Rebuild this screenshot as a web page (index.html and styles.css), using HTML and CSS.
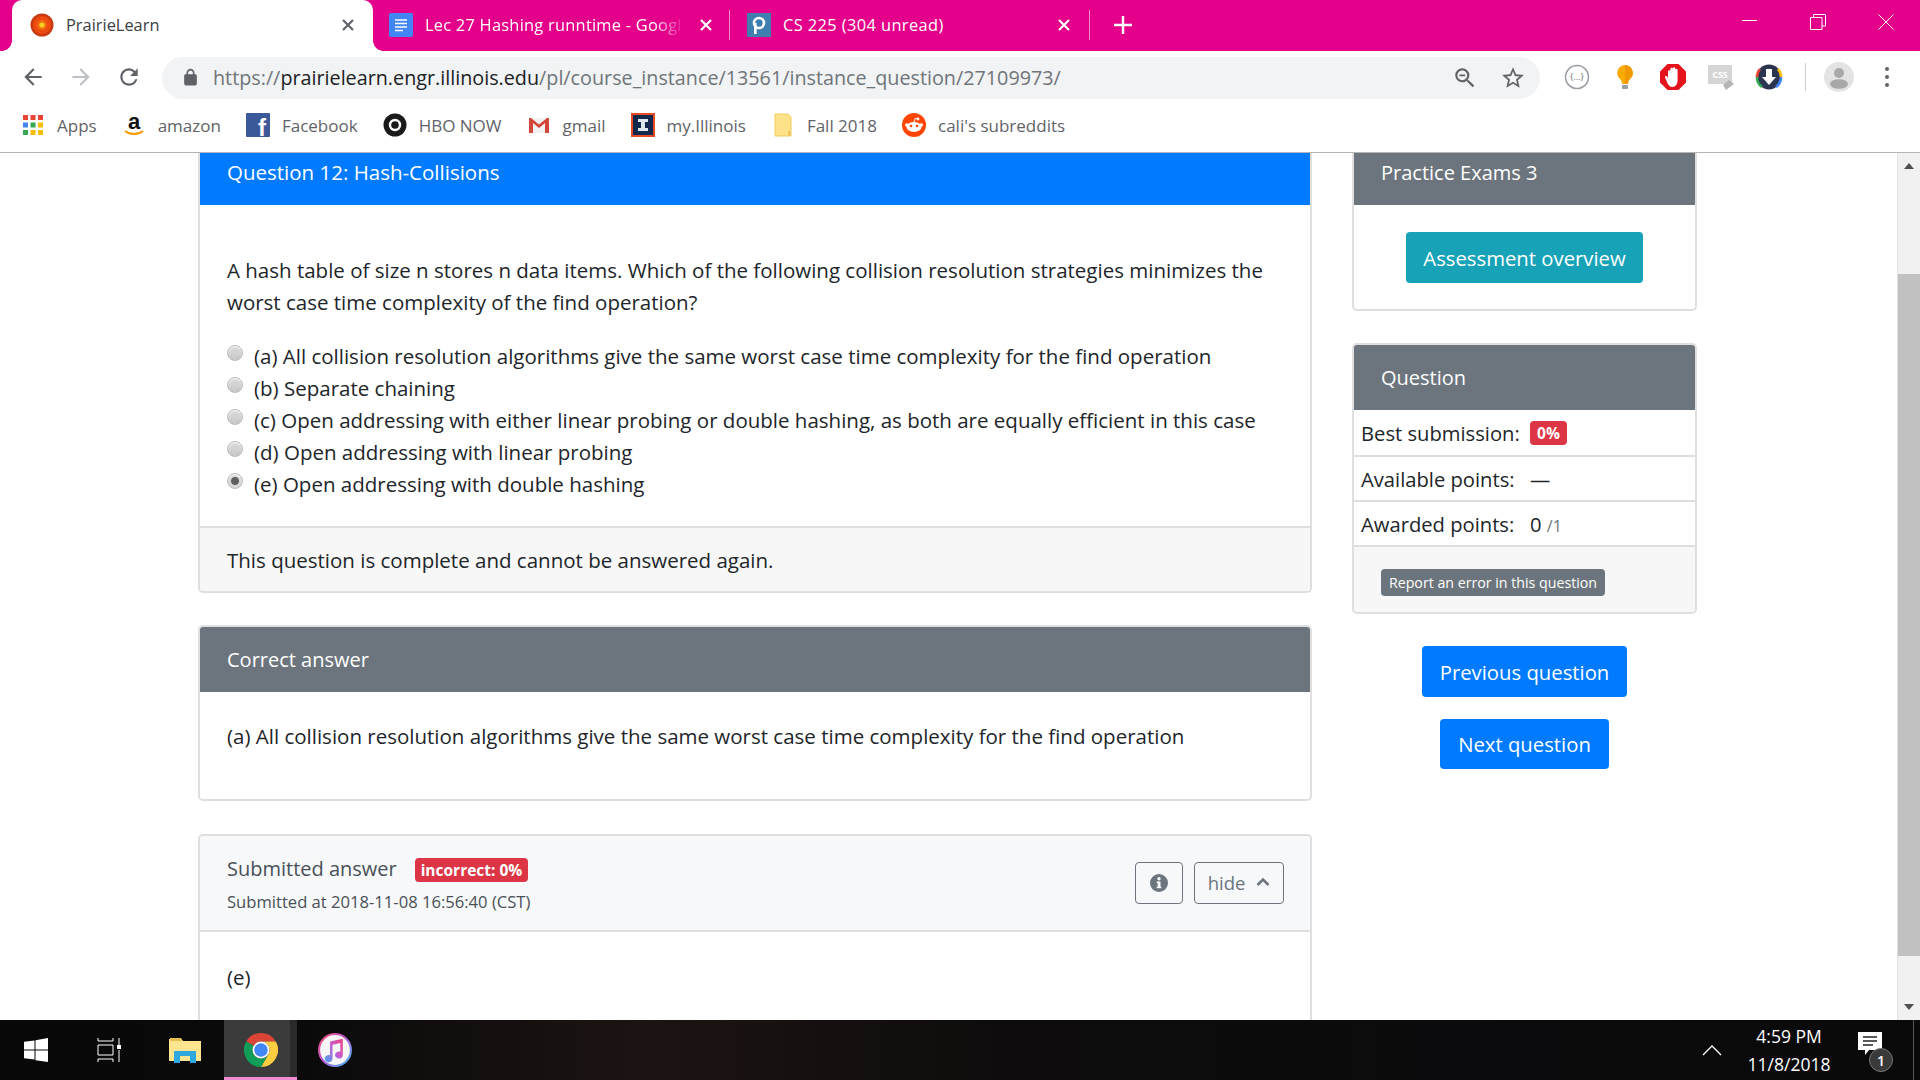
FILE: index.html
```html
<!DOCTYPE html>
<html lang="en">
<head>
<meta charset="utf-8">
<title>PrairieLearn</title>
<link rel="stylesheet" href="styles.css">
</head>
<body>
<div class="app">
  <header class="tabbar">
    <div class="tab tab-active">
      <svg class="fav" viewBox="0 0 24 24"><circle cx="12" cy="12" r="11.500" fill="#c93a12"/><circle cx="12" cy="12" r="9" fill="#ee4a10"/><circle cx="12" cy="12" r="5" fill="#f46a10"/><circle cx="12" cy="12" r="2.600" fill="#f4d020"/></svg>
      <span class="tab-title tab-title-w1 dark">PrairieLearn</span>
      <svg class="tab-x" viewBox="0 0 14 14"><path d="M2 2l10 10M12 2L2 12" stroke="#5f6368" stroke-width="2.200"/></svg>
    </div>
    <div class="tab tab-second">
      <svg class="fav" viewBox="0 0 24 24"><rect width="24" height="24" rx="2" fill="#4285f4"/><path d="M6 7h12M6 10.500h12M6 14h12M6 17.500h8" stroke="#fff" stroke-width="1.500"/></svg>
      <span class="tab-title tab-title-w2 fade">Lec 27 Hashing runntime - Googl</span>
      <svg class="tab-x" viewBox="0 0 14 14"><path d="M2 2l10 10M12 2L2 12" stroke="#fff" stroke-width="2.200"/></svg>
    </div>
    <div class="tab tab-third">
      <svg class="fav" viewBox="0 0 24 24"><rect width="24" height="24" fill="#3f7fb0"/><circle cx="12" cy="10" r="5" fill="none" stroke="#fff" stroke-width="2.600"/><path d="M8.300 10v11" stroke="#fff" stroke-width="2.600"/></svg>
      <span class="tab-title tab-title-w3">CS 225 (304 unread)</span>
      <svg class="tab-x" viewBox="0 0 14 14"><path d="M2 2l10 10M12 2L2 12" stroke="#fff" stroke-width="2.200"/></svg>
    </div>
    <svg class="tab-plus" viewBox="0 0 18 18"><path d="M9 0v18M0 9h18" stroke="#fff" stroke-width="2.400"/></svg>
    <div class="winctl">
      <svg class="win-ic" viewBox="0 0 16 16"><path d="M0 6.500h15" stroke="#fff" stroke-width="1"/></svg>
      <svg class="win-ic" viewBox="0 0 16 16"><path d="M.5 3.500h11.500v12H.5zM3.500 3.500V.5h12v11.500H12" fill="none" stroke="#fff" stroke-width="1"/></svg>
      <svg class="win-ic" viewBox="0 0 16 16"><path d="M.5.500l15 15M15.500.5l-15 15" stroke="#fff" stroke-width="1"/></svg>
    </div>
  </header>

  <div class="toolbar">
    <svg class="nav" viewBox="0 0 24 24"><path fill="#5f6368" d="M20 11H7.830l5.590-5.590L12 4l-8 8 8 8 1.410-1.410L7.830 13H20z"/></svg>
    <svg class="nav" viewBox="0 0 24 24"><path fill="#bdc1c6" d="M4 11h12.170l-5.590-5.590L12 4l8 8-8 8-1.410-1.410L16.170 13H4z"/></svg>
    <svg class="nav" viewBox="0 0 24 24"><path fill="#5f6368" d="M17.650 6.350A7.958 7.958 0 0012 4c-4.420 0-7.990 3.580-7.990 8s3.570 8 7.990 8c3.730 0 6.840-2.550 7.730-6h-2.080A5.990 5.990 0 0112 18c-3.310 0-6-2.690-6-6s2.690-6 6-6c1.660 0 3.140.69 4.220 1.780L13 11h7V4l-2.350 2.350z"/></svg>
    <div class="omnibox">
      <svg class="lock" viewBox="0 0 24 24"><path fill="#5f6368" d="M18 8h-1V6c0-2.760-2.240-5-5-5S7 3.240 7 6v2H6c-1.100 0-2 .9-2 2v10c0 1.100.9 2 2 2h12c1.100 0 2-.9 2-2V10c0-1.100-.9-2-2-2zM9 6c0-1.660 1.340-3 3-3s3 1.340 3 3v2H9V6z"/></svg>
      <span class="url"><span class="url-dim">https://</span><span class="url-host">prairielearn.engr.illinois.edu</span><span class="url-dim">/pl/course_instance/13561/instance_question/27109973/</span></span>
      <svg class="omni-ic" viewBox="0 0 24 24"><path fill="#5f6368" d="M15.500 14h-.79l-.28-.27A6.471 6.471 0 0016 9.500 6.500 6.500 0 109.500 16c1.610 0 3.090-.59 4.230-1.570l.27.28v.79l5 4.990L20.490 19l-4.990-5zm-6 0C7.010 14 5 11.990 5 9.500S7.010 5 9.500 5 14 7.010 14 9.500 11.990 14 9.500 14zM6.800 8.700h5.400v1.700H6.800z"/></svg>
      <svg class="omni-ic" viewBox="0 0 24 24"><path fill="#5f6368" d="M22 9.240l-7.190-.62L12 2 9.190 8.630 2 9.240l5.460 4.730L5.820 21 12 17.270 18.180 21l-1.630-7.030L22 9.240zM12 15.400l-3.760 2.270 1-4.280-3.320-2.880 4.380-.38L12 6.100l1.710 4.040 4.380.38-3.320 2.880 1 4.280L12 15.400z"/></svg>
    </div>
    <div class="ext-row">
      <svg class="ext" viewBox="0 0 32 32"><circle cx="16" cy="16" r="11.500" fill="#fff" stroke="#9aa0a6" stroke-width="1.600"/><text x="16" y="19" class="ext-txt">{…}</text></svg>
      <svg class="ext" viewBox="0 0 32 32"><path d="M16 4a8 8 0 00-5 14c1.500 1.400 2 3 2 5h6c0-2 .5-3.600 2-5a8 8 0 00-5-14z" fill="#f9ab00"/><path d="M16 4a8 8 0 015 14c-1.500 1.400-2 3-2 5h-3z" fill="#f29900"/><rect x="13" y="24" width="6" height="4" rx="1" fill="#9aa0a6"/></svg>
      <svg class="ext" viewBox="0 0 32 32"><path d="M10.500 3h11L29 10.500v11L21.500 29h-11L3 21.500v-11z" fill="#e5141c"/><path d="M11 17v-6.500a1.200 1.200 0 012.400 0V8a1.200 1.200 0 012.400 0V7.500a1.200 1.200 0 012.400 0V9a1.200 1.200 0 012.400 0v10c0 4-2 7-5 7s-4.500-2-6-6l-1.500-3.500c-.5-1.200 1-2 2-1z" fill="#fff"/></svg>
      <svg class="ext" viewBox="0 0 32 32"><rect x="3" y="4" width="24" height="19" fill="#d5d5d5"/><text x="15" y="17" class="ext-css">CSS</text><path d="M18 24l6-5 5 4-8 6z" fill="#b5b5b5"/></svg>
      <svg class="ext" viewBox="0 0 32 32"><circle cx="16" cy="16" r="12.500" fill="#2c3550"/><path d="M4 16a12 12 0 013-8" fill="none" stroke="#ea4335" stroke-width="2.600"/><path d="M4 16a12 12 0 005 10" fill="none" stroke="#34a853" stroke-width="2.600"/><path d="M28 16a12 12 0 00-3-8" fill="none" stroke="#fbbc05" stroke-width="2.600"/><path d="M28 16a12 12 0 01-5 10" fill="none" stroke="#4285f4" stroke-width="2.600"/><path d="M13 8h6v8h4l-7 8-7-8h4z" fill="#fff"/></svg>
      <span class="tool-sep"></span>
      <svg class="avatar" viewBox="0 0 30 30"><circle cx="15" cy="15" r="15" fill="#e3e3e3"/><circle cx="15" cy="11" r="5" fill="#a8a8a8"/><ellipse cx="15" cy="22" rx="9" ry="4.800" fill="#a8a8a8"/></svg>
      <svg class="dots" viewBox="0 0 6 22"><circle cx="3" cy="3" r="2" fill="#5f6368"/><circle cx="3" cy="11" r="2" fill="#5f6368"/><circle cx="3" cy="19" r="2" fill="#5f6368"/></svg>
    </div>
  </div>

  <nav class="bookmarks">
    <div class="bm"><svg class="bm-ic" viewBox="0 0 24 24"><g><rect x="2" y="2" width="5" height="5" fill="#ea4335"/><rect x="9.500" y="2" width="5" height="5" fill="#ea4335"/><rect x="17" y="2" width="5" height="5" fill="#ea4335"/><rect x="2" y="9.500" width="5" height="5" fill="#4285f4"/><rect x="9.500" y="9.500" width="5" height="5" fill="#34a853"/><rect x="17" y="9.500" width="5" height="5" fill="#fbbc05"/><rect x="2" y="17" width="5" height="5" fill="#34a853"/><rect x="9.500" y="17" width="5" height="5" fill="#fbbc05"/><rect x="17" y="17" width="5" height="5" fill="#fbbc05"/></g></svg><span>Apps</span></div>
    <div class="bm"><svg class="bm-ic" viewBox="0 0 24 24"><text x="12" y="16" class="amz">a</text><path d="M3 18c5 4 13 4 18 0" fill="none" stroke="#f90" stroke-width="1.800"/></svg><span>amazon</span></div>
    <div class="bm"><svg class="bm-ic" viewBox="0 0 24 24"><rect width="24" height="24" rx="1" fill="#3b5998"/><text x="16" y="23" class="fb">f</text></svg><span>Facebook</span></div>
    <div class="bm"><svg class="bm-ic" viewBox="0 0 24 24"><circle cx="12" cy="12" r="11.500" fill="#1a1a1a"/><circle cx="12" cy="12" r="5" fill="none" stroke="#fff" stroke-width="2.400"/></svg><span>HBO NOW</span></div>
    <div class="bm"><svg class="bm-ic" viewBox="0 0 24 24"><path d="M2 5h20v15H2z" fill="#f1f1f1"/><path d="M2 5v15h4V10l6 5 6-5v10h4V5h-2l-8 6.500L4 5z" fill="#d44638"/></svg><span>gmail</span></div>
    <div class="bm"><svg class="bm-ic" viewBox="0 0 24 24"><rect x="1" y="1" width="22" height="22" fill="#13294b" stroke="#e84a27" stroke-width="2"/><path d="M7 6h10v3h-3v6h3v3H7v-3h3V9H7z" fill="#dfe6ee"/></svg><span>my.Illinois</span></div>
    <div class="bm"><svg class="bm-ic" viewBox="0 0 24 24"><path d="M4 1h13l3 3v19H4z" fill="#fde28a" stroke="#eecb5c" stroke-width="1"/><rect x="17" y="18" width="3" height="5" fill="#eecb5c"/></svg><span>Fall 2018</span></div>
    <div class="bm"><svg class="bm-ic" viewBox="0 0 24 24"><circle cx="12" cy="12" r="12" fill="#ff4500"/><ellipse cx="12" cy="14" rx="7.500" ry="5" fill="#fff"/><circle cx="4.800" cy="12" r="1.800" fill="#fff"/><circle cx="19.200" cy="12" r="1.800" fill="#fff"/><circle cx="16" cy="6" r="1.400" fill="#fff"/><path d="M12 9l1-3.500 3 .5" fill="none" stroke="#fff" stroke-width="1"/><circle cx="9" cy="13" r="1.300" fill="#ff4500"/><circle cx="15" cy="13" r="1.300" fill="#ff4500"/></svg><span>cali's subreddits</span></div>
  </nav>

  <div class="viewport">
    <main class="main-col">
      <section class="card card-clipped">
        <div class="card-head head-blue head-top">Question 12: Hash-Collisions</div>
        <div class="q-body">
          <p class="q-text">A hash table of size n stores n data items. Which of the following collision resolution strategies minimizes the worst case time complexity of the find operation?</p>
          <div class="opts">
            <div class="opt"><span class="radio"></span><span>(a) All collision resolution algorithms give the same worst case time complexity for the find operation</span></div>
            <div class="opt"><span class="radio"></span><span>(b) Separate chaining</span></div>
            <div class="opt"><span class="radio"></span><span>(c) Open addressing with either linear probing or double hashing, as both are equally efficient in this case</span></div>
            <div class="opt"><span class="radio"></span><span>(d) Open addressing with linear probing</span></div>
            <div class="opt"><span class="radio radio-on"></span><span>(e) Open addressing with double hashing</span></div>
          </div>
        </div>
        <div class="q-foot">This question is complete and cannot be answered again.</div>
      </section>

      <section class="card">
        <div class="card-head head-gray head-mid">Correct answer</div>
        <div class="ans-body">(a) All collision resolution algorithms give the same worst case time complexity for the find operation</div>
      </section>

      <section class="card card-last">
        <div class="sub-head">
          <div class="sub-info">
            <div class="sub-line"><span class="sub-title">Submitted answer</span><span class="badge badge-wide">incorrect: 0%</span></div>
            <div class="sub-time">Submitted at 2018-11-08 16:56:40 (CST)</div>
          </div>
          <div class="sub-btns">
            <button class="btn-out btn-info"><svg class="i-info" viewBox="0 0 20 20"><circle cx="10" cy="10" r="9" fill="#6c757d"/><rect x="8.700" y="8.500" width="2.800" height="6.500" fill="#f7f8fa"/><rect x="7.700" y="8.500" width="2" height="1.500" fill="#f7f8fa"/><rect x="7.700" y="13.700" width="4.600" height="1.500" fill="#f7f8fa"/><circle cx="10" cy="5.800" r="1.700" fill="#f7f8fa"/></svg></button>
            <button class="btn-out btn-hide">hide<svg class="i-chev" viewBox="0 0 14 10"><path d="M1.500 8L7 2.500 12.500 8" fill="none" stroke="#6c757d" stroke-width="2.600"/></svg></button>
          </div>
        </div>
        <div class="sub-body">(e)</div>
      </section>
    </main>

    <aside class="side-col">
      <section class="card card-clipped side-card1">
        <div class="card-head head-gray head-top">Practice Exams 3</div>
        <div class="side-center"><a class="btn btn-teal">Assessment overview</a></div>
      </section>
      <section class="card side-card2">
        <div class="card-head head-gray head-side">Question</div>
        <div class="stat-row stat-first"><span class="stat-k">Best submission:</span><span class="badge badge-small">0%</span></div>
        <div class="stat-row"><span class="stat-k">Available points:</span><span>—</span></div>
        <div class="stat-row"><span class="stat-k">Awarded points:</span><span>0 <small class="stat-small">/1</small></span></div>
        <div class="side-foot"><a class="btn-report">Report an error in this question</a></div>
      </section>
      <div class="side-btns">
        <a class="btn btn-blue btn-prev">Previous question</a>
        <a class="btn btn-blue btn-next">Next question</a>
      </div>
    </aside>

    <div class="scrollbar">
      <div class="sb-btn"><span class="tri-up"></span></div>
      <div class="sb-gap"></div>
      <div class="sb-thumb"></div>
      <div class="sb-fill"></div>
      <div class="sb-btn"><span class="tri-down"></span></div>
    </div>
  </div>

  <footer class="taskbar">
    <div class="tb-slot s-win"><svg class="tb-ic" viewBox="0 0 24 24"><path fill="#fff" d="M0 3.800l10.500-1.400v9H0zM11.500 2.200L24 0v11.400H11.500zM0 12.500h10.500v9.100L0 20.200zM11.500 12.500H24V24l-12.500-1.800z"/></svg></div>
    <div class="tb-slot s-tv"><svg class="tb-ic" viewBox="0 0 24 24"><path d="M1 0v3h15V0M1 7h15v10H1zM1 24v-3h15v3M22 0v7M22 12v12" fill="none" stroke="#fff" stroke-width="1"/><rect x="20" y="7" width="4" height="4" fill="#fff"/></svg></div>
    <div class="tb-slot s-folder"><svg class="tb-folder" viewBox="0 0 32 26"><path d="M0 2h12l2 2h18v20H0z" fill="#fde58f"/><path d="M1 1h11l2 3H1z" fill="#e8c04e"/><path d="M5 14h22v12h-6v-7H11v7H5z" fill="#2fa8e0"/></svg></div>
    <div class="tb-slot s-chrome"><svg class="tb-round" viewBox="0 0 48 48"><path d="M3.200 12A24 24 0 0144.800 12L24 12A12 12 0 0013.600 18z" fill="#db4437"/><path d="M44.800 12A24 24 0 0124 48L34.400 30A12 12 0 0024 12z" fill="#ffcd40"/><path d="M3.200 12A24 24 0 0024 48L34.400 30A12 12 0 0113.600 18z" fill="#0f9d58"/><circle cx="24" cy="24" r="12" fill="#fff"/><circle cx="24" cy="24" r="9.500" fill="#4285f4"/></svg></div>
    <div class="tb-slot s-itunes"><svg class="tb-round" viewBox="0 0 48 48"><defs><linearGradient id="ring" x1="0" y1="0" x2="1" y2="1"><stop offset="0" stop-color="#f0506e"/><stop offset=".5" stop-color="#b45ad8"/><stop offset="1" stop-color="#3ac0f0"/></linearGradient><linearGradient id="note" x1="1" y1="0" x2="0" y2="1"><stop offset="0" stop-color="#f0407a"/><stop offset=".5" stop-color="#c060d8"/><stop offset="1" stop-color="#40a8f0"/></linearGradient></defs><circle cx="24" cy="24" r="22.500" fill="#f6f6f6" stroke="url(#ring)" stroke-width="3"/><path d="M17 12l18-4v23a5.500 5 0 11-3.500-4.500V14l-11 2.500V36a5.500 5 0 11-3.500-4.500z" fill="url(#note)"/></svg></div>
    <div class="tray">
      <svg class="tray-caret" viewBox="0 0 20 12"><path d="M1 11l9-9 9 9" fill="none" stroke="#fff" stroke-width="1.300"/></svg>
      <div class="clock"><span>4:59 PM</span><span>11/8/2018</span></div>
      <div class="notif">
        <svg class="notif-ic" viewBox="0 0 24 24"><path d="M0 0h24v18H11l-4 5v-5H0z" fill="#fff"/><path d="M5 5h14M5 9h14M5 13h10" stroke="#222" stroke-width="1.400"/></svg>
        <span class="notif-badge">1</span>
      </div>
      <span class="tray-end"></span>
    </div>
  </footer>
</div>
</body>
</html>
```

FILE: styles.css
```css
* { box-sizing: border-box; }
html, body { margin: 0; padding: 0; height: 100%; overflow: hidden; }
body { font-family: "Open Sans", "Noto Sans", sans-serif; font-size: 20.500px; color: #212529; background: #fff; }
p { margin: 0; }
button { font: inherit; background: none; }

.app { display: flex; flex-direction: column; height: 1080px; width: 1920px; }

/* Chrome tab strip */
.tabbar { height: 51px; flex: none; background: #e4008a; display: flex; align-items: center; padding-left: 12px; color: #fff; font-size: 16.400px; }
.tab { height: 51px; display: flex; align-items: center; position: relative; }
.tab-active { width: 361px; background: #fff; border-radius: 10px 10px 0 0; padding-left: 18px; padding-bottom: 2px; }
.tab-active::before, .tab-active::after { content: ""; position: absolute; bottom: 0; width: 10px; height: 10px; }
.tab-active::before { left: -10px; background: radial-gradient(circle at 0 0, #e4008a 9.500px, #fff 10px); }
.tab-active::after { right: -10px; background: radial-gradient(circle at 100% 0, #e4008a 9.500px, #fff 10px); }
.tab-second { width: 357px; padding-left: 16px; border-right: 1px solid #f08ac8; height: 30px; margin-bottom: 2px; }
.tab-third { width: 360px; padding-left: 17px; border-right: 1px solid #f08ac8; height: 30px; margin-bottom: 2px; }
.fav { width: 24px; height: 24px; flex: none; }
.tab-title { margin-left: 12px; white-space: nowrap; overflow: hidden; flex: none; }
.tab-title-w1 { width: 275px; }
.tab-title-w2 { width: 260px; letter-spacing: .25px; -webkit-mask-image: linear-gradient(to right, #000 88%, transparent); mask-image: linear-gradient(to right, #000 88%, transparent); }
.tab-title-w3 { width: 274px; letter-spacing: .4px; }
.dark { color: #3c4043; }
.tab-x { width: 14px; height: 14px; flex: none; }
.tab-second .tab-x { margin-left: 14px; }
.tab-plus { width: 18px; height: 18px; margin-left: 24px; flex: none; margin-bottom: 2px; }
.winctl { margin-left: auto; display: flex; align-items: center; gap: 52px; padding-right: 26px; height: 51px; padding-bottom: 8px; }
.win-ic { width: 16px; height: 16px; }

/* Toolbar */
.toolbar { height: 52px; flex: none; display: flex; align-items: center; padding-left: 20px; gap: 22px; background: #fff; }
.nav { width: 26px; height: 26px; flex: none; }
.omnibox { width: 1378px; height: 42px; margin-left: -2px; margin-top: 1px; background: #f1f3f4; border-radius: 21px; display: flex; align-items: center; padding: 0 14px 0 19px; flex: none; }
.lock { width: 19px; height: 19px; flex: none; }
.url { margin-left: 13px; font-size: 19.750px; white-space: nowrap; flex: 1; color: #80868b; }
.url-dim { color: #70757a; }
.url-host { color: #202124; }
.omni-ic { width: 26px; height: 26px; margin-left: 22px; flex: none; }
.ext-row { display: flex; align-items: center; margin-left: -1px; flex: none; }
.ext { width: 32px; height: 32px; margin-right: 16px; flex: none; }
.ext-txt { font-size: 9px; text-anchor: middle; fill: #777; }
.ext-css { font-size: 9px; font-weight: 700; text-anchor: middle; fill: #fff; }
.tool-sep { width: 1px; height: 28px; background: #d0d0d0; margin-left: 4px; }
.avatar { width: 30px; height: 30px; margin-left: 18px; flex: none; }
.dots { width: 6px; height: 22px; margin-left: 30px; flex: none; }

/* Bookmarks */
.bookmarks { height: 50px; flex: none; display: flex; align-items: center; gap: 25px; padding: 0 0 5px 21px; border-bottom: 1px solid #b5b5b5; background: #fff; font-size: 17px; color: #5f6368; }
.bm { display: flex; align-items: center; gap: 12px; white-space: nowrap; }
.bm-ic { width: 24px; height: 24px; flex: none; overflow: visible; }
.amz { font-size: 22px; font-weight: 700; text-anchor: middle; fill: #111; font-family: "Liberation Sans", sans-serif; }
.fb { font-size: 24px; font-weight: 700; text-anchor: middle; fill: #fff; font-family: "Liberation Sans", sans-serif; }

/* Page */
.viewport { height: 867px; flex: none; display: flex; overflow: hidden; background: #fff; }
.main-col { width: 1114px; margin-left: 198px; flex: none; display: flex; flex-direction: column; gap: 32px; }
.card { border: 2px solid #dfdfdf; border-radius: 5px; background: #fff; flex: none; overflow: hidden; }
.card-clipped { border-top: 0; border-top-left-radius: 0; border-top-right-radius: 0; }
.card-last { border-bottom: 0; flex: 1; border-bottom-left-radius: 0; border-bottom-right-radius: 0; margin-top: 1px; }
.card-head { color: #fff; padding-left: 27px; display: flex; align-items: center; font-size: 20px; }
.head-blue { background: #007bff; font-size: 20.500px; }
.head-gray { background: #6c757d; }
.head-top { height: 52px; padding-bottom: 13px; }
.head-blue.head-top { padding-bottom: 15px; }
.head-mid { height: 65px; }
.head-side { height: 65px; }

.q-body { height: 321px; padding: 49px 27px 0; }
.q-text { line-height: 32px; }
.opts { margin-top: 22px; }
.opt { height: 32px; line-height: 32px; display: flex; white-space: nowrap; }
.radio { width: 16px; height: 16px; border-radius: 50%; flex: none; margin: 5px 11px 0 0; background: linear-gradient(#dcdcdc, #c8c8c8); border: 1px solid #b9b9b9; box-shadow: inset 0 1px 1px #fff; }
.radio-on { background: radial-gradient(circle, #5f5f5f 0 3.500px, #d8d8d8 4.500px); }
.q-foot { height: 65px; background: #f7f7f7; border-top: 2px solid #dfdfdf; padding-left: 27px; display: flex; align-items: center; }
.ans-body { height: 107px; padding: 28px 27px 0; line-height: 32px; }

.sub-head { height: 96px; background: #f7f8fa; border-bottom: 2px solid #dfdfdf; display: flex; justify-content: space-between; padding: 0 26px 0 27px; }
.sub-line { display: flex; align-items: center; margin-top: 15px; height: 34px; color: #495057; }
.sub-title { width: 188px; flex: none; font-size: 20px; }
.sub-time { font-size: 16.600px; margin-top: 5px; color: #495057; }
.sub-btns { display: flex; gap: 11px; padding-top: 26px; height: 69px; }
.btn-out { height: 42px; border: 1px solid #6c757d; border-radius: 4px; display: flex; align-items: center; justify-content: center; color: #6c757d; padding: 0; }
.btn-info { width: 48px; }
.btn-hide { width: 90px; font-size: 18.500px; gap: 11px; padding-bottom: 2px; }
.i-info { width: 20px; height: 20px; }
.i-chev { width: 14px; height: 10px; }
.sub-body { padding: 29px 27px 0; line-height: 32px; }

.badge { background: #dc3545; color: #fff; font-weight: 700; font-size: 15.500px; height: 24px; border-radius: 4px; display: inline-flex; align-items: center; justify-content: center; flex: none; }
.badge-wide { width: 113px; margin-top: 4px; }
.badge-small { width: 37px; }

/* Sidebar */
.side-col { width: 345px; margin-left: 40px; flex: none; display: flex; flex-direction: column; }
.side-card1 { height: 158px; }
.side-center { display: flex; justify-content: center; padding-top: 27px; }
.btn { border-radius: 4px; display: flex; align-items: center; justify-content: center; color: #fff; white-space: nowrap; font-size: 20.300px; }
.btn-teal { background: #17a2b8; width: 237px; height: 51px; }
.side-card2 { margin-top: 32px; height: 271px; }
.stat-row { height: 45px; display: flex; align-items: center; padding: 1px 0 0 7px; border-bottom: 2px solid #dfdfdf; font-size: 20.200px; }
.stat-first { height: 47px; }
.stat-k { width: 169px; flex: none; }
.stat-small { font-size: 16px; color: #6c757d; }
.side-foot { background: #f7f7f7; height: 71px; padding: 19px 0 0 27px; }
.btn-report { display: inline-flex; align-items: center; height: 27px; width: 224px; justify-content: center; background: #6c757d; color: #fff; border-radius: 4px; font-size: 14.200px; white-space: nowrap; }
.side-btns { display: flex; flex-direction: column; align-items: center; margin-top: 32px; gap: 22px; }
.btn-blue { background: #007bff; }
.btn-prev { width: 205px; height: 51px; }
.btn-next { width: 169px; height: 50px; }

/* Scrollbar */
.scrollbar { width: 23px; margin-left: auto; flex: none; display: flex; flex-direction: column; background: #f1f1f1; border-left: 1px solid #e4e4e4; }
.sb-btn { height: 26px; flex: none; display: flex; align-items: center; justify-content: center; }
.sb-gap { height: 95px; flex: none; }
.sb-thumb { height: 682px; flex: none; background: #c1c1c1; }
.sb-fill { flex: 1; }
.tri-up { width: 0; height: 0; border: 5px solid transparent; border-top: 0; border-bottom: 6px solid #505050; }
.tri-down { width: 0; height: 0; border: 5px solid transparent; border-bottom: 0; border-top: 6px solid #505050; }

/* Taskbar */
.taskbar { height: 60px; flex: none; display: flex; align-items: stretch; background: linear-gradient(to right, #080808 0, #0a0a0a 300px, #1c1412 650px, #0e0c0c 1000px, #0b0b0d 1500px, #0a0a0a 100%); color: #fff; }
.tb-slot { display: flex; align-items: center; justify-content: center; flex: none; }
.s-win { width: 72px; }
.s-tv { width: 73px; }
.s-folder { width: 79px; }
.s-chrome { width: 73px; background: linear-gradient(to right, #3b3b3b 66px, #2a2a2a 66px); border-bottom: 3px solid #f08cd0; padding-top: 3px; }
.s-itunes { width: 76px; }
.tb-ic { width: 24px; height: 24px; }
.tb-folder { width: 32px; height: 26px; }
.tb-round { width: 34px; height: 34px; }
.tray { margin-left: auto; display: flex; align-items: center; }
.tray-caret { width: 20px; height: 12px; margin-right: 24px; }
.clock { display: flex; flex-direction: column; align-items: center; font-size: 17.500px; line-height: 28px; width: 86px; color: #fff; }
.notif { width: 30px; height: 40px; margin-left: 26px; position: relative; margin-top: 4px; }
.notif-ic { width: 24px; height: 24px; position: absolute; left: 0; top: 0; }
.notif-badge { position: absolute; left: 11px; top: 16px; width: 24px; height: 24px; border-radius: 50%; background: #3a3a3a; border: 1px solid #777; font-size: 14px; font-weight: 600; display: flex; align-items: center; justify-content: center; }
.tray-end { width: 1px; height: 60px; background: #555; margin-left: 25px; margin-right: 6px; }
```
